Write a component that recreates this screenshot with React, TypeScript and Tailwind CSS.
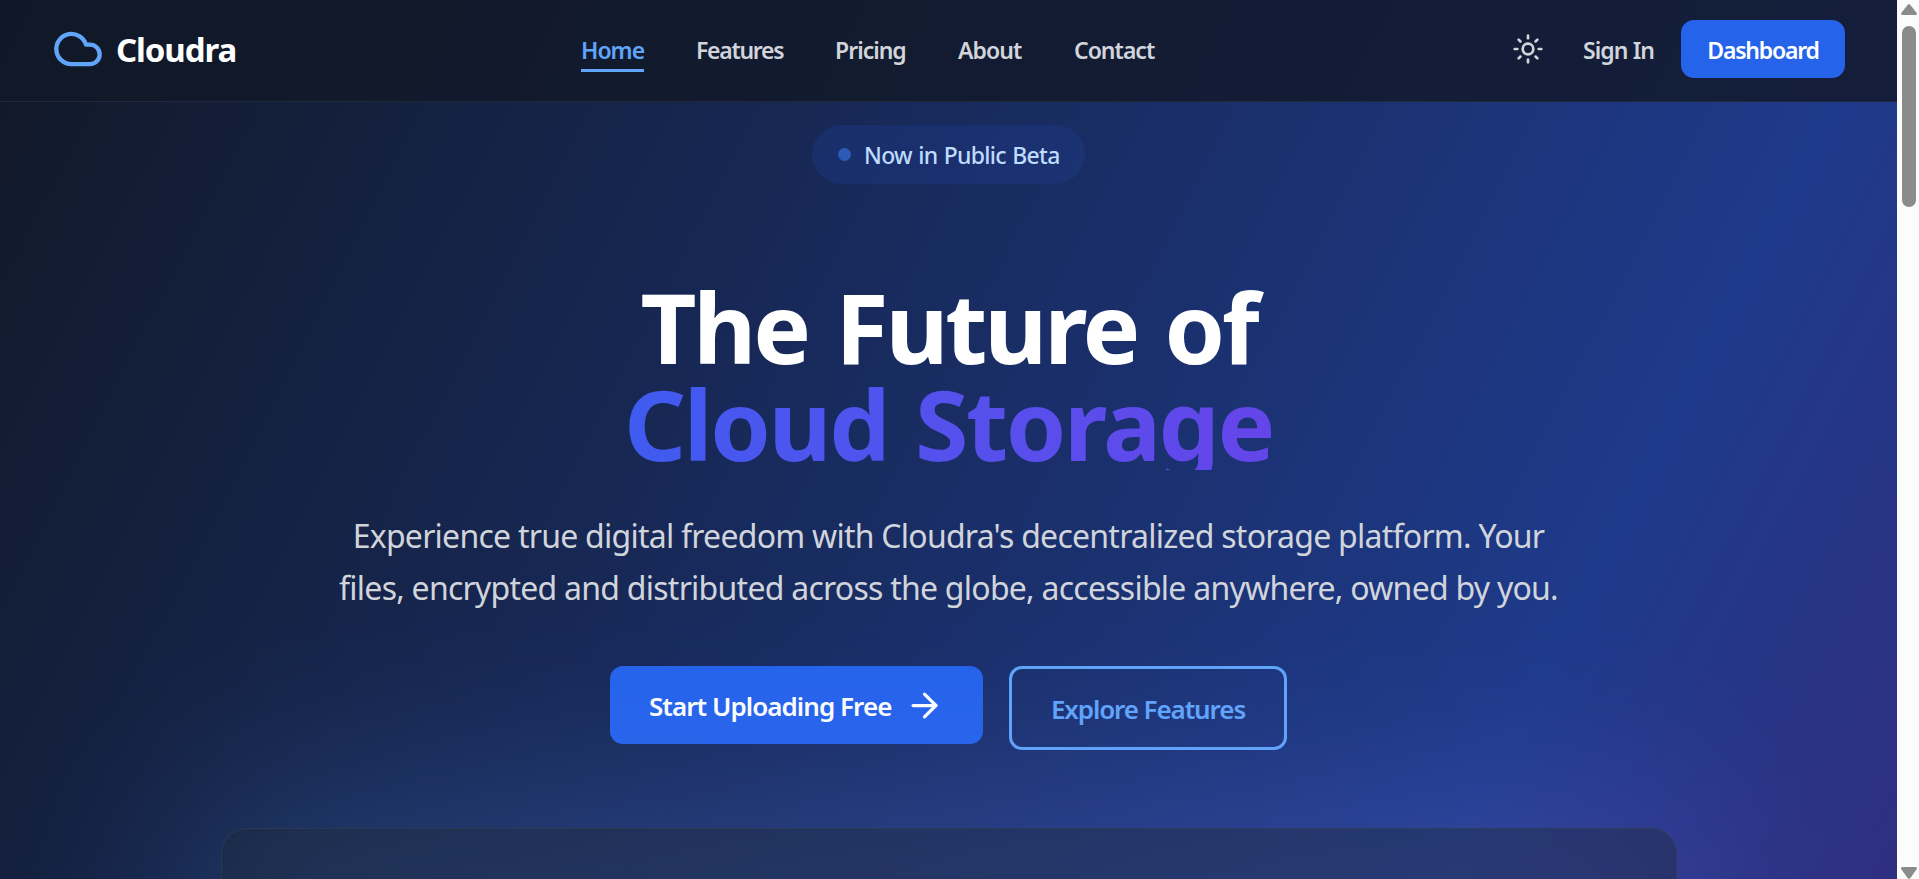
import { ArrowRight, Cloud, Sun } from "lucide-react";

type NavItem = { label: string; sizing: string; active?: boolean };

const navItems: NavItem[] = [
  { label: "Home", sizing: "w-[63px] tracking-[-1px]", active: true },
  { label: "Features", sizing: "w-[87px] tracking-[-1.3px]" },
  { label: "Pricing", sizing: "w-[71px] tracking-[-1px]" },
  { label: "About", sizing: "w-[64px] tracking-[-0.9px]" },
  { label: "Contact", sizing: "w-[80px] tracking-[-1px]" },
];

function Navbar() {
  return (
    <header className="relative z-10 flex h-[102px] shrink-0 items-start border-b border-[#1f2937] bg-[#111827]/80 px-[52px]">
      <div className="flex h-[98px] w-[529px] items-center gap-3">
        <Cloud className="size-[52px] shrink-0 text-[#60a5fa]" />
        <span className="pt-px text-[33px] leading-none font-bold tracking-[-1.1px] whitespace-nowrap text-white">
          Cloudra
        </span>
      </div>

      <nav className="flex h-[98px] items-center gap-[52px] pt-[2px]">
        {navItems.map((item) => (
          <a
            key={item.label}
            className={`relative text-[23px] leading-[32px] font-semibold whitespace-nowrap ${item.sizing} ${
              item.active ? "text-[#60a5fa]" : "text-[#d1d5db]"
            }`}
          >
            {item.label}
            {item.active && <span className="absolute -bottom-[6px] left-0 h-[3px] w-full bg-[#60a5fa]" />}
          </a>
        ))}
      </nav>

      <div className="ml-auto flex h-[98px] items-center">
        <Sun className="mr-[39px] size-8 text-[#d1d5db]" />
        <a className="mr-[26px] w-[72px] pt-[2px] text-[23px] leading-[32px] font-semibold tracking-[-0.9px] whitespace-nowrap text-[#d1d5db]">
          Sign In
        </a>
        <button className="flex h-[58px] w-[164px] items-center justify-center rounded-[13px] bg-[#2563eb] pt-[2px] text-[23px] font-semibold tracking-[-1.2px] text-white">
          Dashboard
        </button>
      </div>
    </header>
  );
}

function Hero() {
  return (
    <main className="relative flex flex-col items-center">
      <div className="mt-[23px] flex h-[59px] w-[273px] items-center rounded-full bg-[#1e3a8a]/40 pl-[26px]">
        <span className="mr-[13px] size-[13px] rounded-full bg-[#2b5bb5]" />
        <span className="text-[23px] leading-[32px] font-medium tracking-[-0.7px] whitespace-nowrap text-[#bfdbfe] [word-spacing:1px]">
          Now in Public Beta
        </span>
      </div>

      <h1 className="mt-[94px] text-center text-[97px] leading-[97px] font-bold whitespace-nowrap text-white">
        <span className="block tracking-[-3.1px] [word-spacing:5px]">The Future of</span>
        <span className="block bg-linear-to-r from-[#3f5bf0] to-[#6445ea] bg-clip-text tracking-[-2.4px] text-transparent [clip-path:inset(0_0_2px_0)] [word-spacing:4px]">
          Cloud Storage
        </span>
      </h1>

      <p className="mt-[38px] text-center text-[32px] leading-[52px] tracking-[-0.75px] whitespace-nowrap text-[#d1d5db]">
        Experience true digital freedom with Cloudra's decentralized storage platform. Your
        <br />
        files, encrypted and distributed across the globe, accessible anywhere, owned by you.
      </p>

      <div className="mt-[52px] flex items-start gap-[26px]">
        <button className="flex h-[78px] w-[373px] items-center rounded-[13px] bg-[#2563eb] pl-[39px] text-[26px] font-semibold tracking-[-0.95px] whitespace-nowrap text-white">
          <span className="w-[256px] pt-[2px] text-left">Start Uploading Free</span>
          <ArrowRight className="size-[39px]" />
        </button>
        <button className="flex h-[84px] w-[278px] items-center justify-center rounded-[13px] border-3 border-[#60a5fa] pt-[2px] text-[26px] font-semibold tracking-[-1.1px] whitespace-nowrap text-[#60a5fa]">
          Explore Features
        </button>
      </div>

      <div className="relative mt-[78px] h-[700px] w-[1456px]">
        {/* glow behind the preview card */}
        <div className="absolute -inset-6 rounded-[26px] bg-linear-to-r from-[#4f9cf5] to-[#8a78f8] opacity-22 blur-[100px]" />
        <div className="relative h-full rounded-[26px] border border-[#374151]/60 bg-[#1f2937]/40" />
      </div>
    </main>
  );
}

function Scrollbar() {
  return (
    <div className="flex h-full w-[22px] flex-col items-center bg-[#fcfcfc] pt-1 pl-[2px]">
      <svg width="16" height="11" viewBox="0 0 16 11" fill="#8b8b8b">
        <path d="M6.6.9Q8-.7 9.4.9L15.6 8.8Q16.6 11 14.5 11H1.5Q-.6 11 .4 8.8Z" />
      </svg>
      <div className="mt-[11px] h-[181px] w-[14px] rounded-full bg-[#8b8b8b]" />
      <svg className="mt-auto" width="16" height="12" viewBox="0 0 16 12" fill="#8b8b8b">
        <path d="M1.5 0H14.5Q16.6 .2 15.6 2.2L9.4 11Q8 12.7 6.6 11L.4 2.2Q-.6 .2 1.5 0Z" />
      </svg>
    </div>
  );
}

export default function App() {
  return (
    <div className="flex h-[879px] w-[1919px] overflow-hidden font-['Noto_Sans',sans-serif]">
      <div className="h-full w-[1897px] overflow-hidden bg-[linear-gradient(117deg,#111827_0px,#1e3a8a_1680px,#312e81_2130px)]">
        <Navbar />
        <Hero />
      </div>
      <Scrollbar />
    </div>
  );
}
